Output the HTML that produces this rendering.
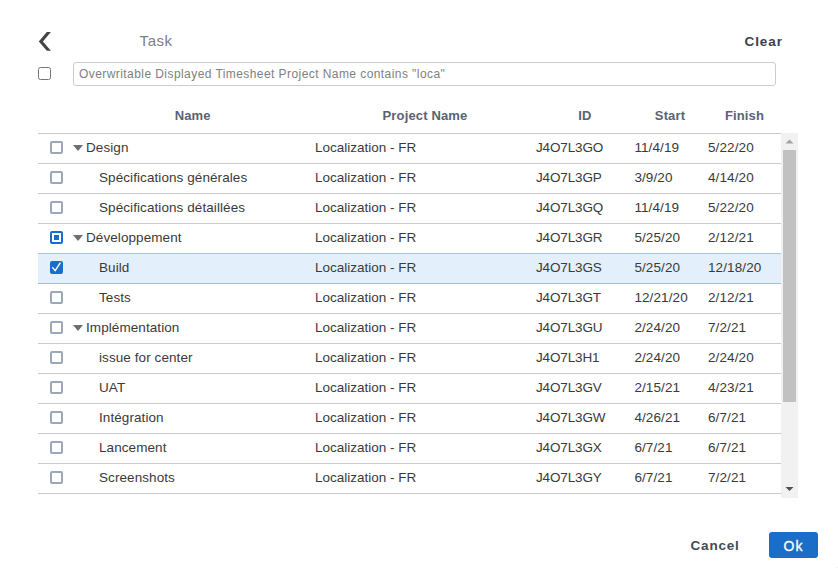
<!DOCTYPE html>
<html><head><meta charset="utf-8">
<style>
html,body{margin:0;padding:0;background:#fff;}
body{width:838px;height:568px;overflow:hidden;position:relative;font-family:"Liberation Sans",sans-serif;color:#444;}
.abs{position:absolute;}
#back{left:36px;top:29px;width:18px;height:24px;}
#title{left:139.6px;top:30px;font-size:15px;color:#7c8087;line-height:21px;letter-spacing:0.55px;}
#clear{right:55px;top:34px;font-size:13.5px;font-weight:bold;color:#3c414b;letter-spacing:0.95px;line-height:16px;}
#cball{left:38px;top:67px;width:11px;height:11px;border:1px solid #767676;border-radius:2.5px;background:#fff;}
#filter{left:73px;top:62px;height:22px;border:1px solid #ccc;border-radius:3px;font-size:12px;color:#808080;line-height:23px;padding-left:5px;box-sizing:content-box;width:696px;letter-spacing:0.43px;white-space:nowrap;}
.hdr{top:108px;font-size:13px;font-weight:bold;color:#586373;letter-spacing:0.15px;line-height:16px;text-align:center;}
#rows{left:38px;top:133px;width:743px;height:361px;}
.row{position:absolute;left:0;width:743px;height:29px;border-top:1px solid #cacbd0;font-size:13.5px;line-height:27px;color:#3a3a3a;}
.row.sel{background:#e3f0fb;border-top:1px solid #a8c7d8;}
.row.aftersel{border-top:1px solid #a3c2d2;}
.row span{position:absolute;top:0;white-space:nowrap;}
.cb{position:absolute;left:12px;top:7px;width:9px;height:9px;border:2px solid #9aa8ba;border-radius:2px;background:#fff;}
.cb.ind{border-color:#1a6ec8;}
.cb.ind:after{content:"";position:absolute;left:2px;top:2px;width:5px;height:5px;background:#1a6ec8;}
.cb.chk{border-color:#1a6ec8;background:#1a6ec8;}
.arr{position:absolute;left:35px;top:11px;width:0;height:0;border-left:5px solid transparent;border-right:5px solid transparent;border-top:6px solid #6a7074;}
.n0{left:48px;letter-spacing:0.08px}.n1{left:61px;letter-spacing:0.08px}.pn{left:277px}.id{left:498px;letter-spacing:-0.15px}.st{left:596.4px;letter-spacing:0.1px}.fi{left:670px;letter-spacing:0.1px}
#sb{left:781px;top:133px;width:17px;height:365px;background:#f1f1f1;}
#thumb{left:783px;top:150px;width:13px;height:252px;background:#c1c1c1;}
#cancel{left:690.6px;top:538px;font-size:13.5px;font-weight:bold;color:#454a52;letter-spacing:0.78px;line-height:16px;}
#ok{left:769px;top:532px;width:49px;height:26px;background:#1a6ec8;border-radius:3px;color:#fff;font-size:14px;line-height:28px;text-align:center;letter-spacing:1px;-webkit-text-stroke:0.3px #fff;overflow:hidden;}
</style></head><body>
<svg id="back" class="abs" viewBox="0 0 18 24"><path d="M14.9 3.1 L10.8 3.1 L2.8 12.45 L10.8 21.8 L14.9 21.8 L6.9 12.45 Z" fill="#444"/></svg>
<div id="title" class="abs">Task</div>
<div id="clear" class="abs">Clear</div>
<div id="cball" class="abs"></div>
<div id="filter" class="abs">Overwritable Displayed Timesheet Project Name contains "loca"</div>
<div class="abs hdr" style="left:142.7px;width:100px">Name</div>
<div class="abs hdr" style="left:365px;width:120px">Project Name</div>
<div class="abs hdr" style="left:555px;width:60px">ID</div>
<div class="abs hdr" style="left:640px;width:60px">Start</div>
<div class="abs hdr" style="left:714.5px;width:60px">Finish</div>
<div id="rows" class="abs">
<div class="row" style="top:0"><i class="cb"></i><i class="arr"></i><span class="n0">Design</span><span class="pn">Localization - FR</span><span class="id">J4O7L3GO</span><span class="st">11/4/19</span><span class="fi">5/22/20</span></div>
<div class="row" style="top:30px"><i class="cb"></i><span class="n1">Spécifications générales</span><span class="pn">Localization - FR</span><span class="id">J4O7L3GP</span><span class="st">3/9/20</span><span class="fi">4/14/20</span></div>
<div class="row" style="top:60px"><i class="cb"></i><span class="n1">Spécifications détaillées</span><span class="pn">Localization - FR</span><span class="id">J4O7L3GQ</span><span class="st">11/4/19</span><span class="fi">5/22/20</span></div>
<div class="row" style="top:90px"><i class="cb ind"></i><i class="arr"></i><span class="n0">Développement</span><span class="pn">Localization - FR</span><span class="id">J4O7L3GR</span><span class="st">5/25/20</span><span class="fi">2/12/21</span></div>
<div class="row sel" style="top:120px"><i class="cb chk"><svg style="position:absolute;left:-2px;top:-2px" width="13" height="13" viewBox="0 0 13 13"><path d="M2.3 6.2 L5.2 9.6 L10.4 1.6" fill="none" stroke="#fff" stroke-width="1.4" stroke-linejoin="miter"/></svg></i><span class="n1">Build</span><span class="pn">Localization - FR</span><span class="id">J4O7L3GS</span><span class="st">5/25/20</span><span class="fi">12/18/20</span></div>
<div class="row aftersel" style="top:150px"><i class="cb"></i><span class="n1">Tests</span><span class="pn">Localization - FR</span><span class="id">J4O7L3GT</span><span class="st">12/21/20</span><span class="fi">2/12/21</span></div>
<div class="row" style="top:180px"><i class="cb"></i><i class="arr"></i><span class="n0">Implémentation</span><span class="pn">Localization - FR</span><span class="id">J4O7L3GU</span><span class="st">2/24/20</span><span class="fi">7/2/21</span></div>
<div class="row" style="top:210px"><i class="cb"></i><span class="n1">issue for center</span><span class="pn">Localization - FR</span><span class="id">J4O7L3H1</span><span class="st">2/24/20</span><span class="fi">2/24/20</span></div>
<div class="row" style="top:240px"><i class="cb"></i><span class="n1">UAT</span><span class="pn">Localization - FR</span><span class="id">J4O7L3GV</span><span class="st">2/15/21</span><span class="fi">4/23/21</span></div>
<div class="row" style="top:270px"><i class="cb"></i><span class="n1">Intégration</span><span class="pn">Localization - FR</span><span class="id">J4O7L3GW</span><span class="st">4/26/21</span><span class="fi">6/7/21</span></div>
<div class="row" style="top:300px"><i class="cb"></i><span class="n1">Lancement</span><span class="pn">Localization - FR</span><span class="id">J4O7L3GX</span><span class="st">6/7/21</span><span class="fi">6/7/21</span></div>
<div class="row" style="top:330px"><i class="cb"></i><span class="n1">Screenshots</span><span class="pn">Localization - FR</span><span class="id">J4O7L3GY</span><span class="st">6/7/21</span><span class="fi">7/2/21</span></div>
<div class="row" style="top:360px;height:0"></div>
</div>
<div id="sb" class="abs"></div>
<div id="thumb" class="abs"></div>
<svg class="abs" style="left:781px;top:133px" width="17" height="17" viewBox="0 0 17 17"><path d="M4.5 10.5 L8.5 6.5 L12.5 10.5 Z" fill="#a3a3a3"/></svg>
<svg class="abs" style="left:781px;top:480px" width="17" height="17" viewBox="0 0 17 17"><path d="M4.5 7 L8.5 11 L12.5 7 Z" fill="#505050"/></svg>
<div class="abs" style="right:0;bottom:0;width:2px;height:2px;background:radial-gradient(circle at 0 0,#fff 1px,#e4e9ed 2.7px)"></div>
<div id="cancel" class="abs">Cancel</div>
<div id="ok" class="abs">Ok</div>
</body></html>
